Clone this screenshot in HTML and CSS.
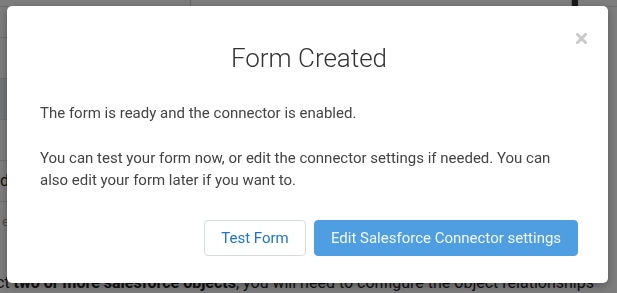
FILE: index.html
```html
<!DOCTYPE html>
<html lang="en">
<head>
<meta charset="UTF-8">
<meta name="viewport" content="width=device-width, initial-scale=1.0">
<title>Form Created</title>
<link rel="stylesheet" href="styles.css">
</head>
<body>
    <div class="page">
        <div class="topbar">
            <span class="tb-a"></span>
            <span class="tb-b"></span>
            <span class="tb-c"></span>
        </div>
        <div class="side">
            <div class="side-row"></div>
            <div class="side-row shaded"></div>
            <div class="side-row"></div>
            <div class="side-row">d</div>
            <div class="side-row small">e</div>
        </div>
        <p class="page-text">ct <b>two or more salesforce objects</b>, you will need to configure the object relationships</p>
    </div>

    <div class="overlay">
        <div class="modal">
            <a class="modal-close" title="Close">
                <svg width="11" height="11" viewBox="0 0 11 11"><path d="M1.5 1.5L9.5 9.5M9.5 1.5L1.5 9.5" stroke="#c9c9c9" stroke-width="3" stroke-linecap="square"/></svg>
            </a>
            <h2 class="modal-title">Form Created</h2>
            <p>The form is ready and the connector is enabled.</p>
            <p>You can test your form now, or edit the connector settings if needed. You can also edit your form later if you want to.</p>
            <div class="button-group">
                <button class="btn btn-outline">Test Form</button>
                <button class="btn btn-primary">Edit Salesforce Connector settings</button>
            </div>
        </div>
    </div>
</body>
</html>
```
FILE: styles.css
```css
body {
    font-family: Roboto, "Liberation Sans", sans-serif;
    margin: 0; padding: 0;
    background: #fafbfc;
    overflow: hidden;
}
.page {
    height: 293px;
    display: flex;
    flex-direction: column;
}
.topbar {
    height: 6px;
    display: flex;
    border-bottom: 1px solid #ddd;
}
.tb-a { width: 190px; }
.tb-b { width: 380px; border-left: 1px solid #ccc; border-right: 1px solid #ccc; }
.tb-c { width: 6px; background: #333; }
.side {
    width: 9px;
    flex: 1;
    padding-top: 30px;
}
.side-row {
    height: 40px;
    border-top: 1px solid #ddd;
    font-size: 16px;
    line-height: 40px;
    color: #222;
    text-align: right;
    overflow: hidden;
}
.side-row.shaded { background: #e6e9ee; }
.side-row.small { font-size: 13px; color: #999; }
.page-text {
    margin: 0;
    height: 18px;
    font-size: 16px;
    line-height: 16px;
    color: #222;
    white-space: nowrap;
    margin-left: -4px;
}

/* fundo escuro do modal */
.overlay {
    position: fixed;
    inset: 0;
    background: rgba(0, 0, 0, 0.5);
    padding: 6px 9px 10px 7px;
}
.modal {
    position: relative;
    height: 277px;
    box-sizing: border-box;
    background: #fff;
    border-radius: 5px;
    box-shadow: 0 3px 9px rgba(0, 0, 0, 0.3);
    padding: 36px 30px 27px 33px;
}
.modal-close {
    position: absolute;
    top: 27px;
    right: 21px;
    cursor: pointer;
    line-height: 0;
}
.modal-title {
    margin: 0 0 28px;
    font-size: 26px;
    font-weight: 300;
    line-height: 32px;
    color: #333;
    text-align: center;
}
.modal p {
    margin: 0 0 23px;
    font-size: 15px;
    line-height: 22px;
    color: #444;
}
.button-group {
    display: flex;
    justify-content: flex-end;
    gap: 8px;
    margin-top: 29px;
}
.btn {
    height: 36px;
    padding: 0;
    border-radius: 4px;
    font-family: Roboto, "Liberation Sans", sans-serif;
    font-size: 15px;
    white-space: nowrap;
    cursor: pointer;
}
.btn-outline {
    width: 102px;
    background: #fff;
    border: 1px solid #d6dbe3;
    color: #1c74cc;
}
.btn-primary {
    width: 264px;
    background: #4f9ee2;
    border: 1px solid #4f9ee2;
    color: #f2f7fc;
}
```
